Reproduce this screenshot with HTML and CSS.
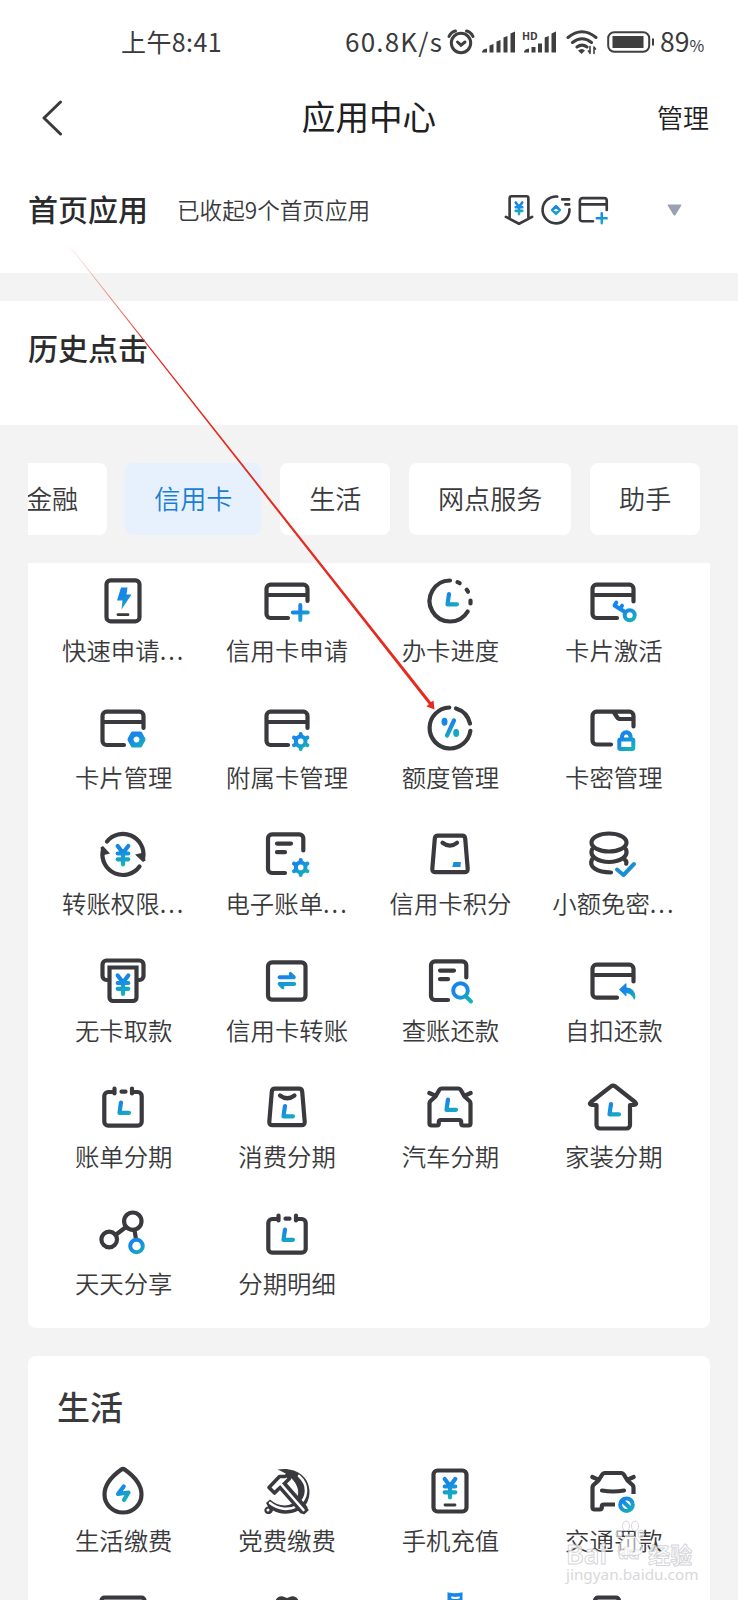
FILE: index.html
```
<!DOCTYPE html>
<html lang="zh-CN">
<head>
    <meta charset="UTF-8">
    <meta name="viewport" content="width=device-width, initial-scale=1.0">
    <title>应用中心</title>
    <link rel="stylesheet" href="styles.css">
</head>
<body>
    <!-- shared icon parts -->
    <svg class="defs" width="0" height="0">
        <defs>
            <linearGradient id="mid" gradientUnits="userSpaceOnUse" x1="20" y1="14" x2="27" y2="35">
                <stop offset="0.3" stop-color="#1687e8"/>
                <stop offset="1" stop-color="#17b6b2"/>
            </linearGradient>
            <linearGradient id="corner" gradientUnits="userSpaceOnUse" x1="31" y1="28" x2="44" y2="46">
                <stop offset="0.3" stop-color="#1687e8"/>
                <stop offset="1" stop-color="#17b6b2"/>
            </linearGradient>
            <g id="card">
                <path d="M25 41H7.5a4 4 0 0 1-4-4V11.7a4 4 0 0 1 4-4h33a4 4 0 0 1 4 4V24"/>
                <path d="M4 18h40" stroke-linecap="butt"/>
            </g>
            <g id="doc">
                <path d="M22 43H9a4 4 0 0 1-4-4V8.3a4 4 0 0 1 4-4h27.300a4 4 0 0 1 4 4V20.500"/>
                <path d="M14 13.600h14M14 22.200h8"/>
            </g>
            <g id="yen" class="c">
                <path d="M18.700 16l5.300 7 5.300-7M24 23v11.500M18.700 23.500h10.600M18.700 29.300h10.600"/>
            </g>
            <g id="ell" class="c">
                <path d="M22 18.500l-1.500 10.300h9.500"/>
            </g>
            <g id="gear" class="b">
                <circle cx="37.700" cy="37.400" r="4.800"/>
                <path d="M37.700 30v2M37.700 43v2M31 33.600l2 1M44.400 33.600l-2 1M31 41.200l2-1M44.400 41.200l-2-1"/>
            </g>
            <g id="bag">
                <path d="M12 5.700h24q3 0 3.200 3l2.500 30q.2 3.500-3.200 3.500h-29q-3.400 0-3.200-3.500l2.500-30q.2-3 3.200-3z"/>
            </g>
            <g id="calendar">
                <path d="M14 9H9.300a4 4 0 0 0-4 4v25.700a4 4 0 0 0 4 4h29.400a4 4 0 0 0 4-4V13a4 4 0 0 0-4-4H34"/>
                <path d="M15.500 5.500v5M33 5.500v5M22.500 8.700h4"/>
            </g>
            <g id="mirrors">
                <path d="M3.300 10l6 2.600M44.700 10l-6 2.600"/>
            </g>
        </defs>
    </svg>

    <div class="screen">
        <div class="status">
            <span class="time">上午8:41</span>
            <span class="speed">60.8K/s</span>
            <svg class="alarm" width="28" height="26" viewBox="0 0 28 26">
                <circle cx="14" cy="14" r="9.700"/>
                <path d="M2 7.500Q4 3 8.500 2M26 7.500Q24 3 19.500 2M10.500 13l3.500 3.200 4-3.200"/>
            </svg>
            <svg class="signal" width="34" height="24" viewBox="0 0 34 24">
                <path d="M0 22.500q0-3.500 5-4v4zM7.500 22.500v-7l4-1.500v8.500zM14.500 22.500v-11l4-1.500v12.500zM21.500 22.500v-15l4-1.500v16.500zM28.500 22.500v-19l4.500-2v21z"/>
            </svg>
            <svg class="signal hd" width="36" height="24" viewBox="0 0 36 24">
                <path d="M2 22.500q0-3.500 5-4v4zM9.500 22.500v-5.500h4v5.500zM16 22.500v-9h4v9zM22.700 22.500v-15l4-1.500v16.500zM29.500 22.500v-19l4.500-2v21z"/>
                <text x="0" y="9.500">HD</text>
            </svg>
            <svg class="wifi" width="32" height="26" viewBox="0 0 32 26">
                <path d="M2 8.500q14-11.500 28 0M6.500 13.500q9.500-7.500 19 0M11 18q5-3.800 10 0"/>
                <path class="solid" d="M12 21.500q4-3 7 0l-3.500 3.500z"/>
                <path class="thin" d="M24 17.500v7M28 18v6.500M22.500 22l1.500 2M29.500 20l-1.500-2"/>
            </svg>
            <svg class="battery" width="48" height="22" viewBox="0 0 48 22">
                <rect x="1.200" y="1.200" width="41" height="19.500" rx="6"/>
                <path class="solid" d="M5.500 5h31v12h-31zM45 7.500h2v7h-2z"/>
            </svg>
            <span class="level">89<small>%</small></span>
        </div>

        <div class="nav">
            <svg width="22" height="36" viewBox="0 0 22 36"><path d="M19.500 2L3 18l16.500 16"/></svg>
            <h1>应用中心</h1>
            <span>管理</span>
        </div>

        <div class="home">
            <h2>首页应用</h2>
            <p>已收起9个首页应用</p>
            <div class="minis">
                <svg class="icon mini" viewBox="0 0 48 48">
                    <path d="M9 36V5a3 3 0 0 1 3-3h24a3 3 0 0 1 3 3v31M3 35l21 11 21-11"/>
                    <use href="#yen" y="-4"/>
                </svg>
                <svg class="icon mini" viewBox="0 0 48 48">
                    <path d="M26 2.500A21.500 21.500 0 1 0 45.500 23M34 7h11M39 15h6"/>
                    <path class="c" d="M24 18l6 6-6 6-6-6z"/>
                </svg>
                <svg class="icon mini" viewBox="0 0 48 48">
                    <path d="M24 42H7a4 4 0 0 1-4-4V9a4 4 0 0 1 4-4h35a4 4 0 0 1 4 4v15M3 15h43"/>
                    <path class="b" d="M38 29v16M30 37h16"/>
                </svg>
            </div>
            <svg class="caret" width="15" height="12" viewBox="0 0 15 12"><path d="M1 .5h13q.8.500 0 1.500l-5.500 9q-1 1-2 0L1 2q-.8-1 0-1.500z"/></svg>
        </div>

        <div class="history">
            <h2>历史点击</h2>
        </div>

        <div class="tabs">
            <div class="tab cut">金融</div>
            <div class="tab on">信用卡</div>
            <div class="tab">生活</div>
            <div class="tab">网点服务</div>
            <div class="tab">助手</div>
        </div>

        <div class="panel first">
            <div class="grid">
                <div class="app">
                    <svg class="icon" viewBox="0 0 48 48">
                        <rect x="7.500" y="3.300" width="33" height="41" rx="4"/>
                        <path class="cf" d="M22 10.500h6.500L27.500 17.500H32.500L22.500 32.500 23.500 23.500H18z"/>
                        <path class="fine" d="M19 37.700h10"/>
                    </svg>
                    <span>快速申请<i>...</i></span>
                </div>
                <div class="app">
                    <svg class="icon" viewBox="0 0 48 48">
                        <use href="#card"/>
                        <path class="b" d="M37.300 28v15M29.800 35.500h15"/>
                    </svg>
                    <span>信用卡申请</span>
                </div>
                <div class="app">
                    <svg class="icon" viewBox="0 0 48 48">
                        <path d="M24 3.500A20.500 20.500 0 1 0 41.700 34.500M31.500 5.200l2.200 1M40.700 12.700l1.300 2M44.500 23.500v3"/>
                        <use href="#ell" y="-1.500" x="1"/>
                    </svg>
                    <span>办卡进度</span>
                </div>
                <div class="app">
                    <svg class="icon" viewBox="0 0 48 48">
                        <path d="M28 41H7.500a4 4 0 0 1-4-4V11.700a4 4 0 0 1 4-4h33a4 4 0 0 1 4 4V24.500"/>
                        <path d="M4 18h40"/>
                        <g class="b"><circle cx="40.700" cy="38.300" r="5"/><path d="M36 35l-10.500-6.500 1.800-3M31.300 31.500l1.700-2.800"/></g>
                    </svg>
                    <span>卡片激活</span>
                </div>

                <div class="app">
                    <svg class="icon" viewBox="0 0 48 48">
                        <use href="#card"/>
                        <path class="bf" fill-rule="evenodd" d="M33.500 27.500h8q1 0 1.500.9l3.300 6.200q.4.900 0 1.800L43 42.600q-.5.900-1.500.9h-8q-1 0-1.500-.9l-3.300-6.200q-.4-.9 0-1.800l3.300-6.200q.5-.9 1.500-.9zM37.500 32.500a3 3 0 1 0 .01 0z"/>
                    </svg>
                    <span>卡片管理</span>
                </div>
                <div class="app">
                    <svg class="icon" viewBox="0 0 48 48">
                        <use href="#card"/>
                        <use href="#gear"/>
                    </svg>
                    <span>附属卡管理</span>
                </div>
                <div class="app">
                    <svg class="icon" viewBox="0 0 48 48">
                        <path d="M23.300 3.500A20.500 20.500 0 1 0 44.400 26.800M30 4.400A20.500 20.500 0 0 1 44 19.500"/>
                        <path class="c" d="M28 16.500L21 31.500"/>
                        <ellipse class="cf" cx="18.500" cy="17.700" rx="3" ry="4"/>
                        <ellipse class="cf" cx="30.200" cy="29" rx="3" ry="4"/>
                    </svg>
                    <span>额度管理</span>
                </div>
                <div class="app">
                    <svg class="icon" viewBox="0 0 48 48">
                        <path d="M22 40.500H7.500a4 4 0 0 1-4-4V11.700a4 4 0 0 1 4-4h33a4 4 0 0 1 4 4V22.500M25 8.500l3 4.500q1 2 3.500 2H44"/>
                        <g class="b"><rect x="30.300" y="35.500" width="14" height="9.500" rx="1"/><path d="M33 34v-1.500q.5-4 4.300-4.200 3.800.2 4.300 4.200V34"/></g>
                    </svg>
                    <span>卡密管理</span>
                </div>

                <div class="app">
                    <svg class="icon" viewBox="0 0 48 48">
                        <path d="M8 11.500A20.500 20.500 0 0 1 44.300 27M40.500 36.500A20.500 20.500 0 0 1 3.700 21"/>
                        <path class="solid" d="M1.500 17.500l2.500-1.500 7 7.500-8 2zM46.500 30.500l-2.500 1.500-8-7.500 9-2z"/>
                        <use href="#yen"/>
                    </svg>
                    <span>转账权限<i>...</i></span>
                </div>
                <div class="app">
                    <svg class="icon" viewBox="0 0 48 48">
                        <use href="#doc"/>
                        <use href="#gear"/>
                    </svg>
                    <span>电子账单<i>...</i></span>
                </div>
                <div class="app">
                    <svg class="icon" viewBox="0 0 48 48">
                        <use href="#bag"/>
                        <path d="M16.500 12.800q7.300 5.500 14.500 0"/>
                        <path class="bf flat" d="M27.500 32h7.300l-.3 5h-8.200z"/>
                    </svg>
                    <span>信用卡积分</span>
                </div>
                <div class="app">
                    <svg class="icon" viewBox="0 0 48 48">
                        <ellipse cx="20" cy="12.500" rx="17.500" ry="9"/>
                        <path d="M3 19.500C0 27 10 32 20 32s20-5 17-12.500M3 29.500C-.5 37 8 42.500 22 42.500M36 30q2 1.500 1.200 3.700"/>
                        <path class="b flat" d="M28 39.500l6.500 5.500L45 34"/>
                    </svg>
                    <span>小额免密<i>...</i></span>
                </div>

                <div class="app">
                    <svg class="icon" viewBox="0 0 48 48">
                        <path d="M8 23h-.5a4 4 0 0 1-4-4V7.500a4 4 0 0 1 4-4h33a4 4 0 0 1 4 4V19a4 4 0 0 1-4 4H40"/>
                        <path d="M10.500 10.500h27v30a3.500 3.500 0 0 1-3.500 3.500H14a3.500 3.500 0 0 1-3.500-3.500z" stroke-linejoin="miter"/>
                        <use href="#yen" y="2.500"/>
                    </svg>
                    <span>无卡取款</span>
                </div>
                <div class="app">
                    <svg class="icon" viewBox="0 0 48 48">
                        <rect x="5" y="5.300" width="37.500" height="37.300" rx="4"/>
                        <path class="cf" d="M16.500 18.200H26v-2.200q1-2 2.500-.5l4 3.500q1 2.500-.8 3.300H16.500q-2-.5-2-2.100 0-1.500 2-2zM31.500 25H16q-2 .5-1.200 2.800l4 4.200q2 1 2.500-.8v-2.200h10q2-.5 2-2 0-1.500-1.800-2z"/>
                    </svg>
                    <span>信用卡转账</span>
                </div>
                <div class="app">
                    <svg class="icon" viewBox="0 0 48 48">
                        <use href="#doc"/>
                        <g class="b"><circle cx="34.500" cy="33.500" r="7.300"/><path d="M40 39.500l5 5"/></g>
                    </svg>
                    <span>查账还款</span>
                </div>
                <div class="app">
                    <svg class="icon" viewBox="0 0 48 48">
                        <path d="M28 40.700H7.500a4 4 0 0 1-4-4V11.700a4 4 0 0 1 4-4h33a4 4 0 0 1 4 4V24.500M4 18h40"/>
                        <path class="bf" d="M30 32.500l6.500-6q1-.5 1 .7v3.300Q46 31 46.500 40l-.8 2.500h-.8Q43 37 37.500 36v2.500q-.2 1-1 .5z"/>
                    </svg>
                    <span>自扣还款</span>
                </div>

                <div class="app">
                    <svg class="icon" viewBox="0 0 48 48">
                        <use href="#calendar"/>
                        <use href="#ell" y="1"/>
                    </svg>
                    <span>账单分期</span>
                </div>
                <div class="app">
                    <svg class="icon" viewBox="0 0 48 48">
                        <use href="#bag"/>
                        <path d="M17 12.500q7.300 5.500 14.500 0"/>
                        <use href="#ell" y="4.500"/>
                    </svg>
                    <span>消费分期</span>
                </div>
                <div class="app">
                    <svg class="icon" viewBox="0 0 48 48">
                        <path d="M15.500 5.500h17q1.500 0 2.300 1.500l3.700 6.500 5 4.500q1 1 1 2.500v20q0 2-2 2h-5.300q-2 0-2-2V39q0-2-2-2H14.800q-2 0-2 2v1.500q0 2-2 2H5.500q-2 0-2-2v-20q0-1.500 1-2.500l5-4.500L13.200 7q.8-1.500 2.300-1.500z"/>
                        <use href="#mirrors"/>
                        <use href="#ell" y="-2"/>
                    </svg>
                    <span>汽车分期</span>
                </div>
                <div class="app">
                    <svg class="icon" viewBox="0 0 48 48">
                        <path d="M7.500 22H3q-3.500-.5-1-3L22 3.300q2-1.500 4 0L46 19q2.500 2.500-1 3h-4v20a3.500 3.500 0 0 1-3.500 3.500H11A3.500 3.500 0 0 1 7.500 42z"/>
                        <use href="#ell" y="2.500"/>
                    </svg>
                    <span>家装分期</span>
                </div>

                <div class="app">
                    <svg class="icon" viewBox="0 0 48 48">
                        <circle cx="33.800" cy="11.200" r="8.700"/>
                        <circle cx="10.200" cy="29.500" r="7.800"/>
                        <path d="M16.500 25l10.500-8M35.500 20l1.300 8"/>
                        <circle class="b" cx="37.500" cy="36" r="6.300"/>
                    </svg>
                    <span>天天分享</span>
                </div>
                <div class="app">
                    <svg class="icon" viewBox="0 0 48 48">
                        <use href="#calendar"/>
                        <use href="#ell" y="1"/>
                    </svg>
                    <span>分期明细</span>
                </div>
            </div>
        </div>

        <div class="panel life">
            <h2>生活</h2>
            <div class="grid">
                <div class="app">
                    <svg class="icon" viewBox="0 0 48 48">
                        <path d="M26 2.700Q42.500 14.500 42.500 27.500A18.500 18 0 0 1 5.500 27.500Q5.500 14.500 22 2.700 24 1.300 26 2.700z"/>
                        <path class="c" d="M24.700 19.500L19 27l10.500-1.500-4.500 7.500"/>
                    </svg>
                    <span>生活缴费</span>
                </div>
                <div class="app">
                    <svg class="icon" viewBox="0 0 48 48">
                        <path class="solid" d="M14.500 2.500C32-.5 46 9 46.500 24c0 7-2 12-5 15.500l4.500 3.500-5 4.500-5.500-4C27 48 16 47.500 10 43.500 8.500 48 4 47.500 2.500 46 0 43 2 40 5 39.500L3 36l4-3.500C14 39 24 40.500 31 35.500 39.500 28 36 11 14.500 2.500z"/>
                        <path class="cutline" d="M36 9c10 9 9 22-1 29.500-9 5.500-20 4-28-2.500"/>
                        <path class="shaft" d="M18 17l22 25"/>
                        <path class="head" d="M6 20.500L16.500 9.500h5.500l2.500-1.500 2 3.500-4.500 4.500-7 6.500-3.500 3.500z"/>
                        <path class="cutline" d="M17 16l23.500 27"/>
                        <circle class="dot" cx="5" cy="43" r="1.500"/>
                    </svg>
                    <span>党费缴费</span>
                </div>
                <div class="app">
                    <svg class="icon" viewBox="0 0 48 48">
                        <rect x="7.500" y="3.500" width="33" height="41" rx="4"/>
                        <use href="#yen" y="-4"/>
                        <path class="fine" d="M19 38h10"/>
                    </svg>
                    <span>手机充值</span>
                </div>
                <div class="app">
                    <svg class="icon" viewBox="0 0 48 48">
                        <path d="M26 37.500H14.800q-2 0-2 2v1q0 2-2 2H5.500q-2 0-2-2v-20q0-1.500 1-2.500l5-4.500L13.200 7.500q.8-1.500 2.300-1.500h17q1.500 0 2.300 1.500l3.700 6 5 4.500q1 1 1 2.500V27" stroke-linecap="butt"/>
                        <path d="M13 23.500q11 2 22 0"/>
                        <use href="#mirrors"/>
                        <g class="b"><circle cx="37.500" cy="37.700" r="6.300"/><path d="M33.500 34l8 7.500"/></g>
                    </svg>
                    <span>交通罚款</span>
                </div>
                <div class="app">
                    <svg class="icon" viewBox="0 0 48 48"><rect class="tint" x="2.500" y="3.500" width="43" height="38" rx="3"/></svg>
                </div>
                <div class="app">
                    <svg class="icon" viewBox="0 0 48 48"><path class="solid" d="M12 8Q14 1.500 20 2.500l4 1.500 4-1.500q6-1 8 5.500z"/></svg>
                </div>
                <div class="app">
                    <svg class="icon" viewBox="0 0 48 48"><path class="flag" d="M21.500-1.800q7 2 15 0V14h-15z"/><path class="flagline" d="M26 3.500q3 1 7 0"/></svg>
                </div>
                <div class="app">
                    <svg class="icon" viewBox="0 0 48 48"><rect class="tint" x="6" y="3.500" width="24" height="40" rx="3"/></svg>
                </div>
            </div>
        </div>

        <svg class="pointer" width="738" height="760" viewBox="0 0 738 760">
            <defs>
                <linearGradient id="red" gradientUnits="userSpaceOnUse" x1="70" y1="248" x2="150" y2="349">
                    <stop offset="0" stop-color="#e62a1e" stop-opacity="0.1"/>
                    <stop offset="1" stop-color="#e62a1e"/>
                </linearGradient>
            </defs>
            <path fill="url(#red)" d="M71.500 248L431 702 433.500 700.500 434.500 709.500 426.500 706.500 428.800 704.200 71 248.500z"/>
        </svg>

        <div class="watermark">
            <svg width="30" height="38" viewBox="0 0 30 38">
                <ellipse cx="4" cy="14" rx="3" ry="4"/>
                <ellipse cx="11" cy="6" rx="3.500" ry="5"/>
                <ellipse cx="20" cy="6" rx="3.500" ry="5"/>
                <ellipse cx="26" cy="14" rx="3" ry="4"/>
                <path d="M15 14q5 1 8 7 6 5 4 11-3 5-12 3-9 2-12-3-1-6 4-11 3-6 8-7z"/>
            </svg>
            <div class="brand"><span>Bai</span><b>du</b><em>经验</em></div>
            <div class="url">jingyan.baidu.com</div>
        </div>
    </div>
</body>
</html>
```

FILE: styles.css
```
* {
    box-sizing: border-box;
    margin: 0;
    padding: 0;
}
body {
    font-family: "Noto Sans CJK SC", "Noto Sans", sans-serif;
    background-color: #f3f3f4;
    color: #3a3a3c;
}
.defs {
    position: absolute;
}
.screen {
    position: relative;
    width: 738px;
    height: 1600px;
    overflow: hidden;
}

/* status bar */
.status {
    display: flex;
    align-items: center;
    height: 84px;
    padding-left: 121px;
    background-color: white;
    font-size: 25px;
    white-space: nowrap;
}
.status span {
    padding-bottom: 3px;
}
.status svg {
    fill: none;
    stroke: #3f3f40;
    stroke-width: 3;
    stroke-linecap: round;
    flex: none;
}
.status .solid, .signal path {
    fill: #3f3f40;
    stroke: none;
}
.time {
    width: 224px;
    letter-spacing: 0.4px;
}
.speed {
    width: 102px;
    font-size: 26px;
    letter-spacing: 1.2px;
}
.alarm {
    margin-right: 7px;
}
.status .signal {
    margin-right: 6px;
    stroke: none;
}
.status .hd {
    margin-right: 8px;
}
.hd text {
    font: bold 10.5px "Noto Sans", sans-serif;
    fill: #3f3f40;
}
.wifi {
    margin-right: 9px;
}
.wifi .thin {
    stroke-width: 1.6;
}
.status .battery {
    stroke-width: 2;
    margin-right: 5px;
}
.level {
    font-size: 26.5px;
}
.level small {
    font-size: 16px;
}

/* title bar */
.nav {
    display: flex;
    align-items: center;
    justify-content: space-between;
    height: 68px;
    padding: 0 29px 0 41px;
    background-color: white;
    color: #202022;
}
.nav svg {
    width: 52px;
    padding-right: 30px;
    fill: none;
    stroke: #3a3a3c;
    stroke-width: 3;
    stroke-linecap: round;
    stroke-linejoin: round;
}
.nav h1 {
    margin-right: 12px;
    padding-bottom: 5px;
    font-size: 33.6px;
    font-weight: 400;
}
.nav span {
    padding-bottom: 3px;
    font-size: 26px;
    font-weight: 350;
}

h2 {
    font-size: 30px;
    line-height: 40px;
    font-weight: 500;
    color: #2b2b2d;
}
.home {
    display: flex;
    align-items: center;
    height: 121px;
    padding: 0 56px 5px 28px;
    background-color: white;
}
.home h2 {
    padding-bottom: 4px;
}
.home p {
    width: 327px;
    margin-left: 29px;
    padding-bottom: 2px;
    font-size: 22.6px;
    font-weight: 350;
}
.minis {
    display: flex;
    gap: 7px;
}
.caret {
    margin-left: auto;
    fill: #9ba0b5;
}
.history {
    height: 124px;
    margin-top: 28px;
    padding: 26px 28px;
    background-color: white;
}

/* category tabs */
.tabs {
    display: flex;
    gap: 18.7px;
    margin: 38px 28px 0;
    overflow: hidden;
}
.tab {
    flex: none;
    height: 72px;
    padding: 0 29px;
    line-height: 70px;
    font-size: 26.1px;
    font-weight: 350;
    border-radius: 8px;
    background-color: white;
}
.tab.cut {
    width: 78.5px;
    padding: 0;
    text-indent: -2px;
    border-radius: 0 8px 8px 0;
}
.tab.on {
    background-color: #e7f1fd;
    color: #1a7fd4;
}

/* app panels */
.panel {
    margin: 28px 28px 0;
    padding: 14px;
    padding-bottom: 28.5px;
    border-radius: 8px;
    background-color: white;
}
.panel.first {
    border-radius: 0 0 8px 8px;
}
.panel.life {
    padding-top: 30px;
}
.life h2 {
    margin: 0 0 41px 15px;
    font-size: 33px;
    color: #3a3a3c;
}
.grid {
    display: grid;
    grid-template-columns: repeat(4, 163.4px);
    row-gap: 36.5px;
}
.app {
    display: flex;
    flex-direction: column;
    align-items: center;
    height: 90px;
}
.app span {
    margin-top: 8px;
    font-size: 24.4px;
    line-height: 34px;
    font-weight: 350;
    white-space: nowrap;
}
.app i {
    font-style: normal;
    letter-spacing: 2px;
}

/* icons */
.icon {
    width: 48px;
    height: 48px;
    overflow: visible;
    fill: none;
    stroke: #3a3a3e;
    stroke-width: 4.2;
    stroke-linecap: round;
    stroke-linejoin: round;
}
.app .icon {
    margin-left: -1px;
}
.icon.mini {
    width: 30px;
    height: 30px;
}
.c {
    stroke: url(#mid);
    stroke-width: 4.2;
}
.b {
    stroke: url(#corner);
    stroke-width: 4;
}
.cf {
    fill: url(#mid);
    stroke: none;
}
.bf {
    fill: url(#corner);
    stroke: none;
}
.b.flat {
    stroke: #1a8fd6;
}
.bf.flat {
    fill: #1a8fd6;
}
.fine {
    stroke-width: 2.8;
}
.icon .solid {
    fill: #3a3a3e;
    stroke: none;
}
.cutline {
    stroke: white;
    stroke-width: 2.6;
}
.shaft {
    stroke-width: 9.5;
}
.head {
    fill: white;
    stroke-width: 3.6;
}
.dot {
    fill: white;
    stroke: none;
}
.tint {
    fill: #d9dade;
}
.flag {
    fill: #1687e8;
    stroke: none;
}
.flagline {
    stroke: white;
    stroke-width: 2;
}

.pointer {
    position: absolute;
    left: 0;
    top: 0;
}

/* corner watermark */
.watermark {
    position: absolute;
    left: 566px;
    top: 1520px;
    width: 140px;
    height: 70px;
    color: rgba(255, 255, 255, 0.75);
    -webkit-text-stroke: 1px rgba(200, 200, 203, 0.75);
    font-family: "Noto Sans", "Noto Sans CJK SC", sans-serif;
}
.watermark svg {
    position: absolute;
    left: 49px;
    top: 0;
    fill: rgba(255, 255, 255, 0.55);
    stroke: rgba(200, 200, 203, 0.75);
}
.brand {
    display: flex;
    align-items: center;
    height: 26px;
    margin-top: 20px;
    font-size: 27px;
    font-weight: 600;
}
.brand b {
    margin-left: 11px;
    font-size: 16px;
}
.brand em {
    margin-left: 9px;
    font-size: 22px;
    font-style: normal;
}
.url {
    margin-top: -1px;
    font-size: 15.3px;
    line-height: 18px;
    color: #d8d8da;
    -webkit-text-stroke: 0;
}
```
